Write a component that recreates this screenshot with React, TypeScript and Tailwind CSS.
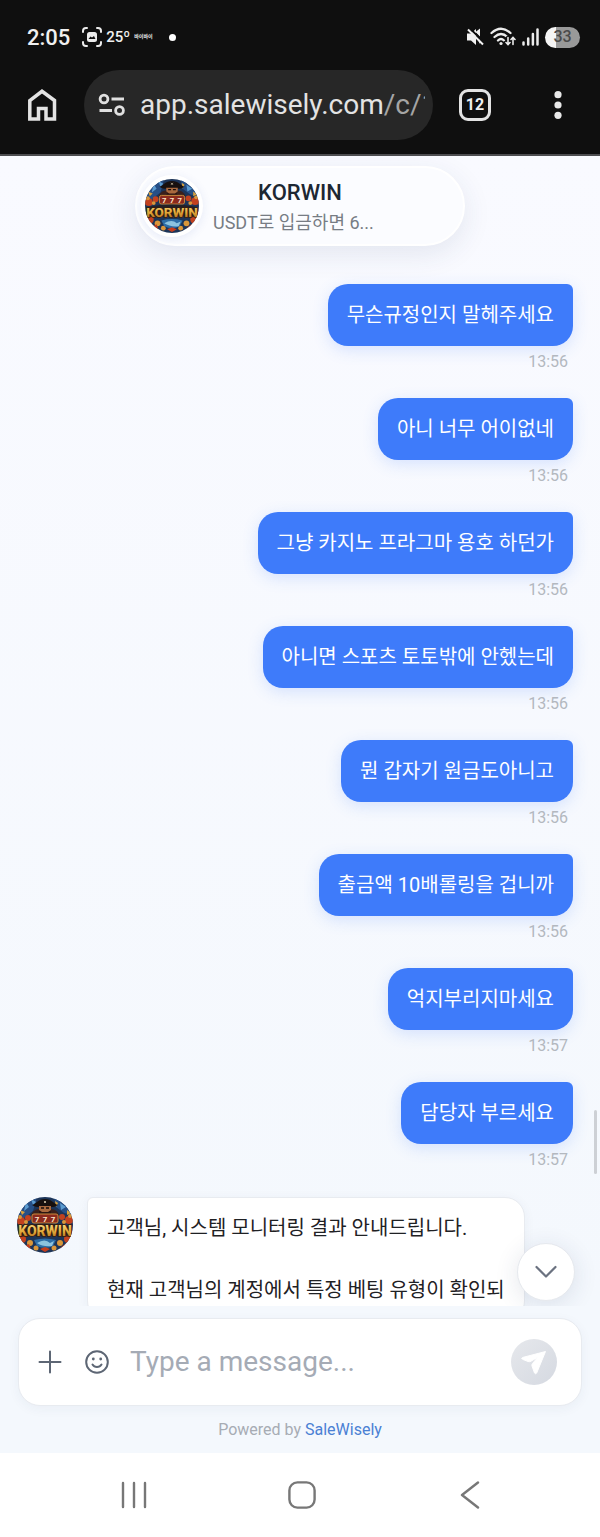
import { useState } from "react";

type Message = { id: number; text: string; time: string };

const MESSAGES: Message[] = [
  { id: 1, text: "무슨규정인지 말헤주세요", time: "13:56" },
  { id: 2, text: "아니 너무 어이없네", time: "13:56" },
  { id: 3, text: "그냥 카지노 프라그마 용호 하던가", time: "13:56" },
  { id: 4, text: "아니면 스포츠 토토밖에 안헸는데", time: "13:56" },
  { id: 5, text: "뭔 갑자기 원금도아니고", time: "13:56" },
  { id: 6, text: "출금액 10배롤링을 겁니까", time: "13:56" },
  { id: 7, text: "억지부리지마세요", time: "13:57" },
  { id: 8, text: "담당자 부르세요", time: "13:57" },
];

const Avatar: React.FC<{ id: string; className: string }> = ({ id, className }) => (
  <svg viewBox="0 0 56 56" className={className} role="img" aria-label="KORWIN">
    <defs>
      <clipPath id={`${id}-clip`}>
        <circle cx="28" cy="28" r="28" />
      </clipPath>
      <linearGradient id={`${id}-gold`} x1="0" y1="0" x2="0" y2="1">
        <stop offset="0" stopColor="#fbe08a" />
        <stop offset="0.55" stopColor="#e2a93a" />
        <stop offset="1" stopColor="#a8641a" />
      </linearGradient>
    </defs>
    <g clipPath={`url(#${id}-clip)`}>
      <rect width="56" height="56" fill="#1c3458" />
      <path d="M0 0h20l-4 14-9 7H0zM37 0h19v18l-9-2-8-6z" fill="#264f86" />
      <path d="M9 5l3 5-5 4zM43 6l6 4-5 3zM14 2l5 3-3 3z" fill="#5b9bd0" />
      <path d="M3 13l5 2-3 3zM50 13l4 3-4 2zM38 4l3 2-2 4z" fill="#d9a13b" />
      {/* pirate */}
      <path d="M15 8c4-1 6-6 13-6s9 5 13 6c-4 3-8 2-13 2s-9 1-13-2z" fill="#17100f" />
      <path d="M27 4l2 2M29 4l-2 2" stroke="#d8c9a8" strokeWidth="0.8" />
      <path d="M22 9h12v6l-4 4h-4l-4-4z" fill="#a9693f" />
      <path d="M22 13l3 2h6l3-2v6H22z" fill="#2b1512" />
      <path d="M24 11h3M29 11h3" stroke="#160c0a" strokeWidth="1.5" />
      <path d="M14 19c1-5 5-7 8-7v7zM34 12c4 0 8 3 8 7h-8z" fill="#3a201c" />
      {/* coins and flames on both sides */}
      <g fill="#c2411f">
        <circle cx="4" cy="24" r="4" />
        <circle cx="11" cy="21" r="3" />
        <circle cx="52" cy="23" r="4" />
        <circle cx="45" cy="20" r="3" />
        <circle cx="5" cy="42" r="4" />
        <circle cx="51" cy="42" r="4" />
      </g>
      <g fill="#d9963a">
        <circle cx="9" cy="25" r="2" />
        <circle cx="3" cy="20" r="2" />
        <circle cx="47" cy="25" r="2" />
        <circle cx="53" cy="19" r="2" />
        <circle cx="13" cy="46" r="3" />
        <circle cx="43" cy="46" r="3" />
        <circle cx="19" cy="51" r="2.500" />
        <circle cx="37" cy="51" r="2.500" />
      </g>
      <rect x="15" y="17" width="26" height="9" rx="2" fill="#8c2a1e" stroke="#c98a3d" />
      <g fontSize="8" fontWeight="700" fontFamily="Roboto, sans-serif" fill="#ffe9cf" textAnchor="middle">
        <text x="20" y="24.500">7</text>
        <text x="28" y="24.500">7</text>
        <text x="36" y="24.500">7</text>
      </g>
      <path d="M2 29q26-5 52 0l1 11q-27-3-54 0z" fill="#241a17" opacity="0.75" />
      <text
        x="28"
        y="39"
        textAnchor="middle"
        fontSize="14"
        fontWeight="800"
        fontFamily="Roboto, sans-serif"
        fill={`url(#${id}-gold)`}
        stroke="#3b1d09"
        strokeWidth="1.5"
        paintOrder="stroke"
      >
        KORWIN
      </text>
      <path d="M17 43q11-3 22 0l-3 6q-8 4-16 0z" fill="#2c6da6" />
      <path d="M20 46q8-5 13 0l4-2-2 5q-9 1-15-3z" fill="#8cc3df" />
      <path d="M23 52l5-2 5 2-5 3zM8 49l4-2 2 5zM43 51l5-4 1 3z" fill="#c23d1d" />
    </g>
  </svg>
);

const StatusBar: React.FC = () => (
  <div className="flex h-14 items-end justify-between pr-5 pl-[27px]">
    <div className="flex h-[38px] items-center">
      <span className="text-[22px] font-medium">2:05</span>
      <svg viewBox="0 0 20 20" className="ml-3 size-5" fill="none" stroke="#ececec" strokeWidth="2" strokeLinecap="round">
        <path d="M1 5V4a3 3 0 0 1 3-3h1M15 1h1a3 3 0 0 1 3 3v1M19 15v1a3 3 0 0 1-3 3h-1M5 19H4a3 3 0 0 1-3-3v-1" />
        <rect x="5" y="5" width="10" height="10" rx="2.5" fill="#ececec" stroke="none" />
        <path d="M6.5 12l2-2.5 1.5 1 2-1.5 1.5 3z" fill="#111" stroke="none" />
      </svg>
      <span className="ml-1 text-[15px] font-medium">25º</span>
      <span className="ml-1 font-['Roboto','Noto_Sans_CJK_KR',sans-serif] text-[5px] font-bold">바이바이</span>
      <span className="ml-4 size-[7px] rounded-full bg-white" />
    </div>
    <div className="flex h-[38px] items-center">
      <svg viewBox="0 0 18 18" className="size-[18px]">
        <path d="M1 5.500h4l5-4.500v16L5 12.500H1zM9.500 4l4.500-3.500v8zM11 10l3 2v4z" fill="#f2f2f2" />
        <path d="M3.500 0l15 15" stroke="#0f0f0f" strokeWidth="2" />
        <path d="M2 1.500l15 15" stroke="#f2f2f2" strokeWidth="2" />
      </svg>
      <svg viewBox="0 0 26 20" className="ml-[6px] h-5 w-[26px]" fill="none" stroke="#ececec" strokeWidth="2.300" strokeLinecap="round">
        <path d="M1.500 6q9.500-8.500 19 0M4.500 10q6.500-6 13 0M8 13.500q3-3 6 0" />
        <circle cx="11" cy="16.500" r="1.600" fill="#ececec" stroke="none" />
        <path d="M18 10.500v7M16 15.500l2 2 2-2M23 17.500v-7M21 12.500l2-2 2 2" stroke="#0f0f0f" strokeWidth="4" />
        <path d="M18 10.500v7M16 15.500l2 2 2-2M23 17.500v-7M21 12.500l2-2 2 2" strokeWidth="1.600" />
      </svg>
      <svg viewBox="0 0 17 18" className="ml-[6px] h-[18px] w-[17px]" stroke="#ececec" strokeWidth="2.500" strokeLinecap="round">
        <path d="M1.500 14.500v2M6.200 10.500v6M10.900 6v10.500M15.500 1.500v15" />
      </svg>
      <span className="ml-[6px] flex h-[21px] w-[35px] items-center justify-center rounded-full bg-linear-to-r from-[#f5f5f5] from-32% to-[#999] to-32% text-base font-medium text-[#4b4b4b]">
        33
      </span>
    </div>
  </div>
);

const BrowserBar: React.FC = () => (
  <div className="flex h-[98px] items-start pt-[14px] pr-8 pl-[26px]">
    <button type="button" aria-label="Home" className="flex h-[70px] items-center">
      <svg viewBox="0 0 32 34" className="h-[34px] w-8" fill="none" stroke="#e3e3e3" strokeWidth="3.500">
        <path d="M3.800 31V12.500l12.200-9.200 12.500 9.200V31h-8.500V20.500h-7.500V31z" />
      </svg>
    </button>
    <div className="ml-[26px] flex h-[70px] min-w-0 flex-1 items-center rounded-full bg-[#272727] pr-2 pl-[14px]">
      <svg viewBox="0 0 28 24" className="h-6 w-7 shrink-0" fill="none" stroke="#e0e0e0" strokeWidth="2.800">
        <circle cx="6" cy="6" r="3.900" />
        <circle cx="21.500" cy="17.500" r="3.900" />
        <path d="M13.500 6H26M1.500 17.500H14" />
      </svg>
      <span className="ml-[14px] overflow-hidden text-[28px] leading-9 whitespace-nowrap text-[#e3e3e3]">
        app.salewisely.com<span className="text-[#a5a5a5]">/c/1</span>
      </span>
    </div>
    <button type="button" className="mt-[19px] ml-[26px] flex size-8 items-center justify-center rounded-[9px] border-[3px] border-[#e3e3e3] text-base font-bold">
      12
    </button>
    <button type="button" aria-label="Menu" className="ml-[57px] flex h-[70px] w-5 items-center justify-center">
      <svg viewBox="0 0 8 28" className="h-7 w-2" fill="#e8e8e8">
        <circle cx="4" cy="3.700" r="3.600" />
        <circle cx="4" cy="14" r="3.600" />
        <circle cx="4" cy="24.300" r="3.600" />
      </svg>
    </button>
  </div>
);

const Bubble: React.FC<{ message: Message }> = ({ message }) => (
  <li className="flex flex-col items-end">
    <p className="rounded-[20px] rounded-tr-md bg-[#3e7bfa] px-[19px] py-4 text-xl leading-[30px] text-white shadow-[0_4px_16px_rgba(62,123,250,0.18)]">
      {message.text}
    </p>
    <time className="mt-1 pr-[5px] text-base leading-6 text-[#b3b8bf]">{message.time}</time>
  </li>
);

const Composer: React.FC = () => {
  const [draft, setDraft] = useState("");

  return (
    <footer className="bg-[#f4f8fd] px-[18px] pt-3 pb-[11px]">
      <form
        onSubmit={(e) => e.preventDefault()}
        className="flex h-[88px] items-center rounded-[22px] border border-[#e8ebf0] bg-white pr-6 pl-[19px] shadow-[0_3px_12px_rgba(30,50,90,0.05)]"
      >
        <button type="button" aria-label="Attach">
          <svg viewBox="0 0 24 24" className="size-6" stroke="#5d6674" strokeWidth="2" strokeLinecap="round">
            <path d="M12 1.500v21M1.500 12h21" />
          </svg>
        </button>
        <button type="button" aria-label="Emoji" className="ml-[22px]">
          <svg viewBox="0 0 26 26" className="size-[26px]" fill="none" stroke="#5d6674" strokeWidth="2" strokeLinecap="round">
            <circle cx="13" cy="13" r="10.800" />
            <path d="M8.500 15.500c2 3.300 7 3.300 9 0" />
            <circle cx="9.300" cy="10" r="1.400" fill="#5d6674" stroke="none" />
            <circle cx="16.700" cy="10" r="1.400" fill="#5d6674" stroke="none" />
          </svg>
        </button>
        <input
          type="text"
          aria-label="Message"
          placeholder="Type a message..."
          value={draft}
          onChange={(e) => setDraft(e.target.value)}
          className="ml-5 min-w-0 flex-1 text-[28px] leading-9 text-gray-800 outline-none placeholder:text-[#a5abb5]"
        />
        <button
          type="submit"
          aria-label="Send"
          className="flex size-[46px] items-center justify-center rounded-full bg-linear-to-br from-[#e6e8ec] to-[#d5d9e1]"
        >
          <svg viewBox="0 0 46 46" className="size-[46px]">
            <path
              d="M34.500 12.500L11.500 18.500q-1.800.8 0 1.800l5.500 2.200q1.500.6 3-.3L27 18l-5.500 6.500q-1 1.200-.5 2.500l2.500 7q1.300 1.600 2.200 0z"
              fill="#fff"
              stroke="#fff"
              strokeWidth="1"
              strokeLinejoin="round"
            />
          </svg>
        </button>
      </form>
      <p className="mt-3 text-center text-base leading-6 text-[#a7acb4]">
        Powered by{" "}
        <a href="#" className="text-[#4a80d4]">
          SaleWisely
        </a>
      </p>
    </footer>
  );
};

const SystemNav: React.FC = () => (
  <nav className="flex h-[84px] items-center justify-around bg-white pr-[46px] pl-[50px]">
    <button type="button" aria-label="Recents">
      <svg viewBox="0 0 28 28" className="size-7" stroke="#777" strokeWidth="2.400" strokeLinecap="round">
        <path d="M3 2v24M14 2v24M25 2v24" />
      </svg>
    </button>
    <button type="button" aria-label="Home screen">
      <svg viewBox="0 0 28 28" className="size-7" fill="none" stroke="#777" strokeWidth="2.400">
        <rect x="1.400" y="1.400" width="25.200" height="25.200" rx="8" />
      </svg>
    </button>
    <button type="button" aria-label="Back">
      <svg viewBox="0 0 28 28" className="size-7" fill="none" stroke="#777" strokeWidth="2.400" strokeLinecap="round" strokeLinejoin="round">
        <path d="M22 1.500L6 14l16 12.500" />
      </svg>
    </button>
  </nav>
);

const App: React.FC = () => {
  return (
    <div className="flex h-screen flex-col bg-white font-['Roboto','Noto_Sans_CJK_KR',sans-serif]">
      <div className="border-b-2 border-[#4d4d50] bg-[#0f0f0f] text-[#f0f0f0]">
        <StatusBar />
        <BrowserBar />
      </div>

      <main className="relative min-h-0 flex-1 overflow-hidden bg-linear-to-b from-[#f9faff] to-[#f4f8fd]">
        <header className="mx-auto mt-[10px] flex h-20 w-[330px] items-center rounded-full border-2 border-white bg-[#fbfcff] pl-1 shadow-[0_8px_28px_rgba(40,60,110,0.10)]">
          <div className="flex size-[62px] shrink-0 items-center justify-center rounded-full bg-white shadow-[0_2px_10px_rgba(50,80,180,0.10)]">
            <Avatar id="header" className="size-[54px]" />
          </div>
          <div className="ml-[10px] w-[174px] pt-[5px] text-center">
            <h1 className="text-[22px] leading-7 font-medium text-[#1d2733]">KORWIN</h1>
            <p className="text-left text-lg leading-8 text-[#777c84]">USDT로 입금하면 6...</p>
          </div>
        </header>

        <ul className="mt-[38px] flex flex-col gap-6 pr-[27px]">
          {MESSAGES.map((message) => (
            <Bubble key={message.id} message={message} />
          ))}
        </ul>

        <div className="mt-[25px] flex items-start pl-[17px]">
          <Avatar id="agent" className="size-14 shrink-0" />
          <div className="ml-[14px] w-[438px] rounded-[20px] rounded-tl-md border border-[#e8ebf0] bg-white px-[19px] py-[14px] text-xl leading-8 text-[#1f2124] shadow-[0_2px_12px_rgba(30,50,90,0.05)]">
            <p>고객님, 시스템 모니터링 결과 안내드립니다.</p>
            <p className="mt-[30px] whitespace-nowrap">현재 고객님의 계정에서 특정 베팅 유형이 확인되</p>
          </div>
        </div>

        <button
          type="button"
          aria-label="Scroll to latest"
          className="absolute right-[25px] bottom-[5px] flex size-[58px] items-center justify-center rounded-full border border-[#e6e9ee] bg-white shadow-[0_4px_24px_rgba(30,50,90,0.12)]"
        >
          <svg viewBox="0 0 22 14" className="h-[14px] w-[22px]" fill="none" stroke="#6b7280" strokeWidth="2.200" strokeLinecap="round" strokeLinejoin="round">
            <path d="M1.500 2L11 11.500 20.500 2" />
          </svg>
        </button>
        <div className="absolute right-[3px] bottom-[132px] h-16 w-[3px] rounded-full bg-[#cdd0d5]" />
      </main>

      <Composer />
      <SystemNav />
    </div>
  );
};

export default App;
